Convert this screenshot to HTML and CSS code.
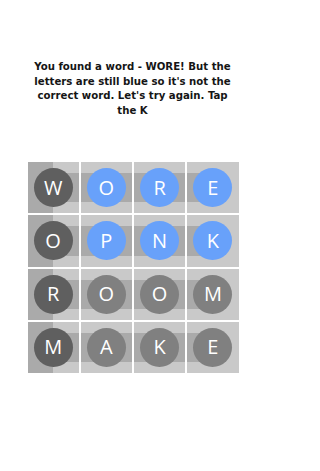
FILE: index.html
```html
<!DOCTYPE html>
<html>
<head>
<meta charset="utf-8">
<link rel="stylesheet" href="styles.css">
</head>
<body>
<div class="page">
  <p class="msg">You found a word - WORE! But the letters are still blue so it's not the correct word. Let's try again. Tap the K</p>
  <div class="board">
    <div class="cell first"><span class="tile dark">W</span></div>
    <div class="cell mid"><span class="tile blue">O</span></div>
    <div class="cell mid"><span class="tile blue">R</span></div>
    <div class="cell last"><span class="tile blue">E</span></div>

    <div class="cell first"><span class="tile dark">O</span></div>
    <div class="cell mid"><span class="tile blue">P</span></div>
    <div class="cell mid"><span class="tile blue">N</span></div>
    <div class="cell last"><span class="tile blue">K</span></div>

    <div class="cell first"><span class="tile dark">R</span></div>
    <div class="cell mid"><span class="tile grey">O</span></div>
    <div class="cell mid"><span class="tile grey">O</span></div>
    <div class="cell last"><span class="tile grey">M</span></div>

    <div class="cell first"><span class="tile dark">M</span></div>
    <div class="cell mid"><span class="tile grey">A</span></div>
    <div class="cell mid"><span class="tile grey">K</span></div>
    <div class="cell last"><span class="tile grey">E</span></div>
  </div>
</div>
</body>
</html>
```
FILE: styles.css
```css
html, body {
  margin: 0;
  padding: 0;
  background: #ffffff;
}
.page {
  width: 265px;
  display: flex;
  flex-direction: column;
  align-items: center;
  padding-top: 60px;
}
.msg {
  margin: 0;
  width: 200px;
  text-align: center;
  font-family: "DejaVu Sans Condensed", "DejaVu Sans", Verdana, sans-serif;
  font-stretch: condensed;
  font-weight: bold;
  font-size: 11.3px;
  line-height: 14.5px;
  color: #151515;
}
.board {
  margin-top: 44px;
  margin-left: 1px;
  width: 211px;
  height: 211px;
  display: grid;
  grid-template-columns: repeat(4, 1fr);
  grid-template-rows: repeat(4, 1fr);
  gap: 2px;
}
.cell {
  position: relative;
  background-color: #c9c9c9;
  display: flex;
  align-items: center;
  justify-content: center;
}
.cell::before {
  content: "";
  position: absolute;
  top: 11px;
  bottom: 11px;
  left: 0;
  right: 0;
  background: #aaaaaa;
}
.cell.first::before {
  left: 50%;
}
.cell.last::before {
  right: 50%;
}
.cell.first::after {
  content: "";
  position: absolute;
  top: 0;
  bottom: 0;
  left: 0;
  width: 50%;
  background: #aaaaaa;
}
.tile {
  position: relative;
  z-index: 1;
  width: 39px;
  height: 39px;
  border-radius: 50%;
  display: flex;
  align-items: center;
  justify-content: center;
  color: #ffffff;
  font-family: "Open Sans", "Noto Sans", sans-serif;
  font-size: 20px;
  line-height: 1;
}
.tile.dark { background: #5f5f5f; }
.tile.grey { background: #808080; }
.tile.blue { background: #68a1fa; }
```
